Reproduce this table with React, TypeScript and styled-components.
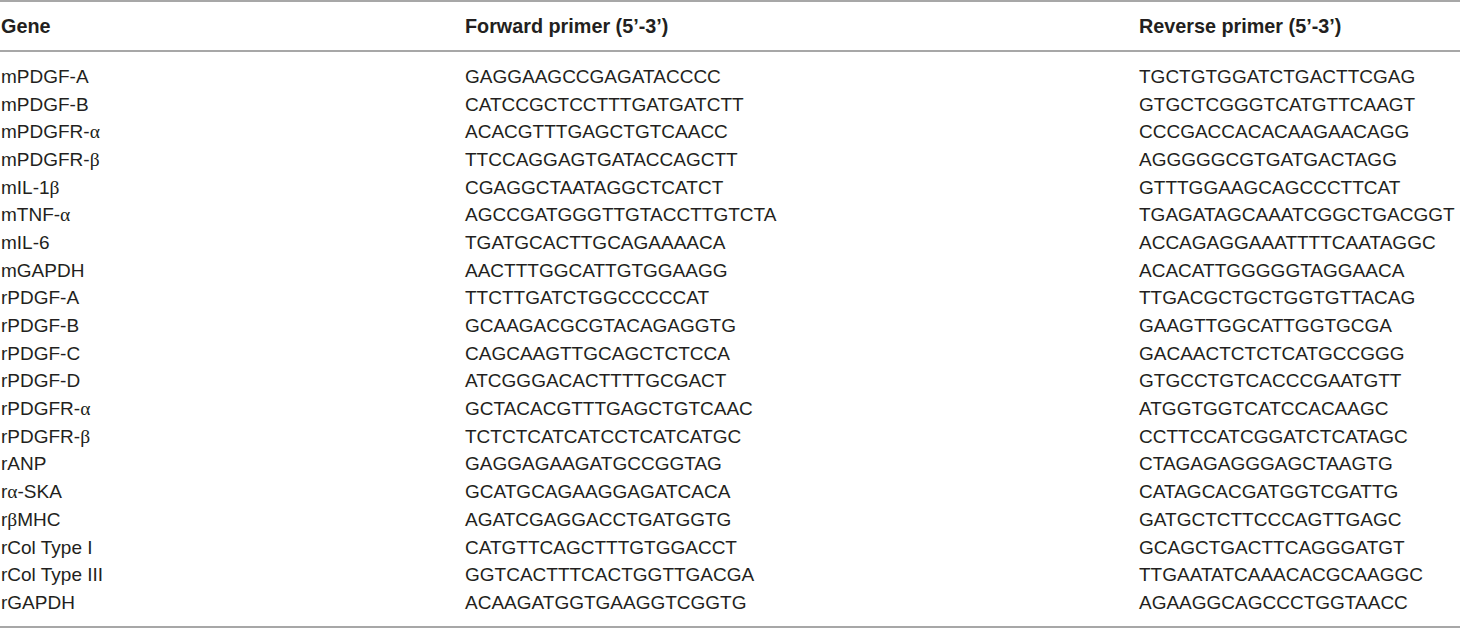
import styled, { createGlobalStyle } from 'styled-components';

const GlobalStyle = createGlobalStyle`
  html, body {
    margin: 0;
    padding: 0;
    background: #ffffff;
  }
  body {
    font-family: "Liberation Sans", Arial, sans-serif;
    color: #231f20;
  }
`;

const Table = styled.div`
  width: 1460px;
  border-top: 2px solid #a7a7a7;
  border-bottom: 2px solid #a7a7a7;
  box-sizing: border-box;
`;

const HeaderRow = styled.div`
  display: grid;
  grid-template-columns: 464px 674px 1fr;
  height: 47px;
  align-items: center;
  border-bottom: 2px solid #a7a7a7;
  font-size: 19.8px;
  font-weight: 700;
  padding-top: 1px;
`;

const Body = styled.div`
  padding: 11px 0 9px;
`;

const Row = styled.div`
  display: grid;
  grid-template-columns: 464px 674px 1fr;
  height: 27.7px;
  align-items: center;
  font-size: 19px;
  white-space: nowrap;
`;

const Cell = styled.div`
  padding-left: 1px;
`;

const Greek = styled.span`
  font-family: "Liberation Serif", "Times New Roman", serif;
  font-size: 19.5px;
`;

type Primer = { gene: React.ReactNode; fwd: string; rev: string };

const a = <Greek>α</Greek>;
const b = <Greek>β</Greek>;

const rows: Primer[] = [
  { gene: 'mPDGF-A', fwd: 'GAGGAAGCCGAGATACCCC', rev: 'TGCTGTGGATCTGACTTCGAG' },
  { gene: 'mPDGF-B', fwd: 'CATCCGCTCCTTTGATGATCTT', rev: 'GTGCTCGGGTCATGTTCAAGT' },
  { gene: <>mPDGFR-{a}</>, fwd: 'ACACGTTTGAGCTGTCAACC', rev: 'CCCGACCACACAAGAACAGG' },
  { gene: <>mPDGFR-{b}</>, fwd: 'TTCCAGGAGTGATACCAGCTT', rev: 'AGGGGGCGTGATGACTAGG' },
  { gene: <>mIL-1{b}</>, fwd: 'CGAGGCTAATAGGCTCATCT', rev: 'GTTTGGAAGCAGCCCTTCAT' },
  { gene: <>mTNF-{a}</>, fwd: 'AGCCGATGGGTTGTACCTTGTCTA', rev: 'TGAGATAGCAAATCGGCTGACGGT' },
  { gene: 'mIL-6', fwd: 'TGATGCACTTGCAGAAAACA', rev: 'ACCAGAGGAAATTTTCAATAGGC' },
  { gene: 'mGAPDH', fwd: 'AACTTTGGCATTGTGGAAGG', rev: 'ACACATTGGGGGTAGGAACA' },
  { gene: 'rPDGF-A', fwd: 'TTCTTGATCTGGCCCCCAT', rev: 'TTGACGCTGCTGGTGTTACAG' },
  { gene: 'rPDGF-B', fwd: 'GCAAGACGCGTACAGAGGTG', rev: 'GAAGTTGGCATTGGTGCGA' },
  { gene: 'rPDGF-C', fwd: 'CAGCAAGTTGCAGCTCTCCA', rev: 'GACAACTCTCTCATGCCGGG' },
  { gene: 'rPDGF-D', fwd: 'ATCGGGACACTTTTGCGACT', rev: 'GTGCCTGTCACCCGAATGTT' },
  { gene: <>rPDGFR-{a}</>, fwd: 'GCTACACGTTTGAGCTGTCAAC', rev: 'ATGGTGGTCATCCACAAGC' },
  { gene: <>rPDGFR-{b}</>, fwd: 'TCTCTCATCATCCTCATCATGC', rev: 'CCTTCCATCGGATCTCATAGC' },
  { gene: 'rANP', fwd: 'GAGGAGAAGATGCCGGTAG', rev: 'CTAGAGAGGGAGCTAAGTG' },
  { gene: <>r{a}-SKA</>, fwd: 'GCATGCAGAAGGAGATCACA', rev: 'CATAGCACGATGGTCGATTG' },
  { gene: <>r{b}MHC</>, fwd: 'AGATCGAGGACCTGATGGTG', rev: 'GATGCTCTTCCCAGTTGAGC' },
  { gene: 'rCol Type I', fwd: 'CATGTTCAGCTTTGTGGACCT', rev: 'GCAGCTGACTTCAGGGATGT' },
  { gene: 'rCol Type III', fwd: 'GGTCACTTTCACTGGTTGACGA', rev: 'TTGAATATCAAACACGCAAGGC' },
  { gene: 'rGAPDH', fwd: 'ACAAGATGGTGAAGGTCGGTG', rev: 'AGAAGGCAGCCCTGGTAACC' },
];

export default function App() {
  return (
    <>
      <GlobalStyle />
      <Table>
        <HeaderRow>
          <Cell>Gene</Cell>
          <Cell>Forward primer (5’-3’)</Cell>
          <Cell>Reverse primer (5’-3’)</Cell>
        </HeaderRow>
        <Body>
          {rows.map((r, i) => (
            <Row key={i}>
              <Cell>{r.gene}</Cell>
              <Cell>{r.fwd}</Cell>
              <Cell>{r.rev}</Cell>
            </Row>
          ))}
        </Body>
      </Table>
    </>
  );
}
